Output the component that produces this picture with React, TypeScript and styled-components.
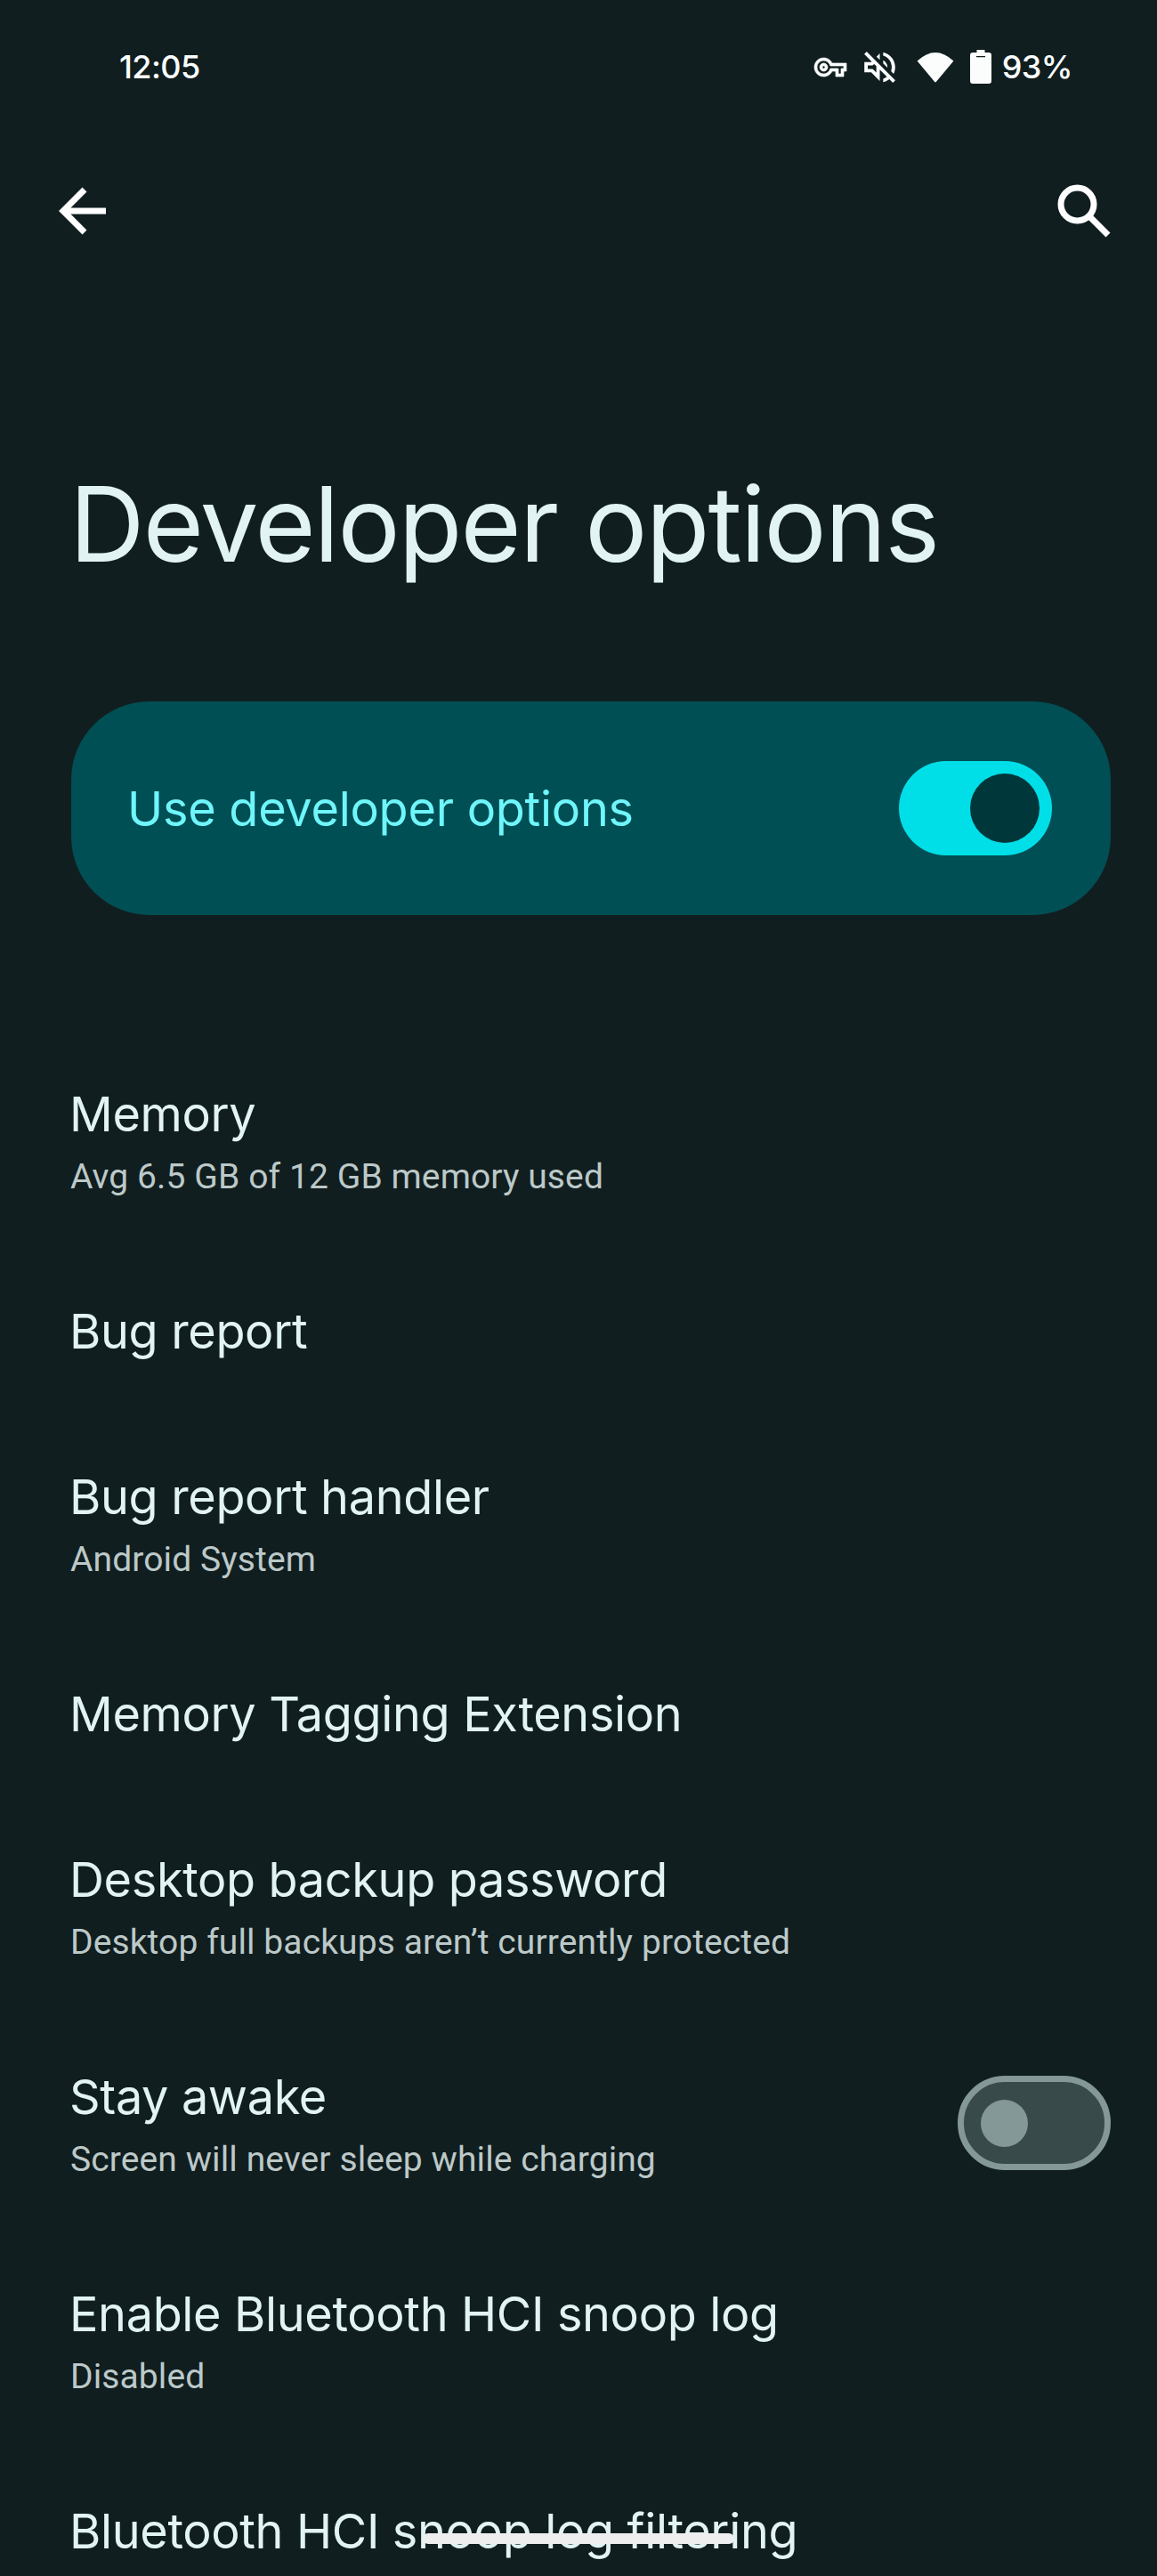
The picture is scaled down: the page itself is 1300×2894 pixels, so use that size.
import React from "react";
import styled, { createGlobalStyle } from "styled-components";

const Global = createGlobalStyle`
  html, body { margin: 0; padding: 0; background: #111e20; }
  #root { width: 1300px; }
`;

const Screen = styled.div`
  position: relative;
  width: 1300px;
  height: 2894px;
  overflow: hidden;
  background: #111e20;
  font-family: "Inter", "Liberation Sans", sans-serif;
`;

const StatusBar = styled.div`
  height: 150px;
  box-sizing: border-box;
  padding: 0 95px 0 134px;
  display: flex;
  align-items: center;
  justify-content: space-between;
  color: #fafdfc;
  font-size: 36px;
  font-weight: 500;
  letter-spacing: -0.6px;
`;

const StatusIcons = styled.div`
  display: flex;
  align-items: center;
`;

const StatusGlyph = styled.svg<{ $gap: number; $bold?: boolean }>`
  display: block;
  fill: #fafdfc;
  stroke: ${(p) => (p.$bold ? "#fafdfc" : "none")};
  stroke-width: ${(p) => (p.$bold ? 0.45 : 0)};
  overflow: visible;
  margin-right: ${(p) => p.$gap}px;
`;

const TopBar = styled.div`
  height: 174px;
  box-sizing: border-box;
  padding: 0 52px 0 65px;
  display: flex;
  align-items: center;
  justify-content: space-between;
`;

const NavIcon = styled.svg`
  display: block;
  fill: none;
  stroke: #ffffff;
  stroke-width: 7;
`;

const Title = styled.h1`
  margin: 0;
  padding: 199px 0 0 78px;
  height: 132px;
  font-size: 117px;
  line-height: 132px;
  font-weight: 400;
  color: #e2f3f3;
  letter-spacing: -1.8px;
`;

const MainCard = styled.div`
  margin: 133px 52px 0 80px;
  height: 240px;
  box-sizing: border-box;
  padding: 0 66px 0 63px;
  border-radius: 88px;
  background: #004f54;
  display: flex;
  align-items: center;
  justify-content: space-between;
`;

const MainLabel = styled.span`
  font-size: 54px;
  font-weight: 400;
  color: #6ff6fb;
  letter-spacing: -0.25px;
`;

const Track = styled.div<{ $on: boolean }>`
  width: 172px;
  height: 106px;
  box-sizing: border-box;
  flex: none;
  border-radius: 53px;
  display: flex;
  align-items: center;
  background: ${(p) => (p.$on ? "#00dfe8" : "#384a49")};
  border: ${(p) => (p.$on ? "none" : "7px solid #839897")};
  justify-content: ${(p) => (p.$on ? "flex-end" : "flex-start")};
  padding: ${(p) => (p.$on ? "0 14px" : "0 19px")};
`;

const Knob = styled.div<{ $on: boolean }>`
  width: ${(p) => (p.$on ? 78 : 53)}px;
  height: ${(p) => (p.$on ? 78 : 53)}px;
  border-radius: 50%;
  background: ${(p) => (p.$on ? "#00373b" : "#839897")};
`;

const List = styled.div`
  margin-top: 131px;
`;

const Row = styled.div<{ $two: boolean }>`
  height: ${(p) => (p.$two ? 244 : 186)}px;
  box-sizing: border-box;
  padding: 0 52px 0 78px;
  display: flex;
  align-items: center;
  justify-content: space-between;
`;

const RowText = styled.div<{ $two: boolean }>`
  display: flex;
  flex-direction: column;
  padding-top: ${(p) => (p.$two ? 12 : 0)}px;
`;

const RowTitle = styled.div`
  font-size: 54px;
  line-height: 70px;
  font-weight: 400;
  color: #e2f3f3;
  letter-spacing: -0.35px;
  white-space: nowrap;
`;

const RowSub = styled.div`
  font-family: "Roboto", "Liberation Sans", sans-serif;
  font-size: 39px;
  line-height: 70px;
  padding-left: 1px;
  color: #bcc9c8;
  letter-spacing: 0.1px;
  white-space: nowrap;
`;

const GestureHandle = styled.div`
  position: absolute;
  left: 475px;
  top: 2846px;
  width: 350px;
  height: 12px;
  border-radius: 6px;
  background: #eeeeee;
`;

const rows = [
  { t: "Memory", s: "Avg 6.5 GB of 12 GB memory used" },
  { t: "Bug report" },
  { t: "Bug report handler", s: "Android System" },
  { t: "Memory Tagging Extension" },
  { t: "Desktop backup password", s: "Desktop full backups aren’t currently protected" },
  { t: "Stay awake", s: "Screen will never sleep while charging", toggle: true },
  { t: "Enable Bluetooth HCI snoop log", s: "Disabled" },
  { t: "Bluetooth HCI snoop log filtering", s: "\u00a0" },
];

export default function App() {
  return (
    <Screen>
      <Global />
      <StatusBar>
        <span>12:05</span>
        <StatusIcons>
          <StatusGlyph $gap={20} $bold width={36} height={21} viewBox="0 5 24 14">
            <path d="M22 19h-6v-4h-2.68c-1.14 2.42-3.6 4-6.32 4-3.86 0-7-3.14-7-7s3.14-7 7-7c2.72 0 5.17 1.58 6.32 4H24v6h-2v4zm-4-2h2v-4h2v-2H11.94l-.23-.67C11.01 8.34 9.11 7 7 7c-2.76 0-5 2.24-5 5s2.24 5 5 5c2.11 0 4.01-1.34 4.71-3.33l.23-.67H18v4zM7 15c-1.65 0-3-1.35-3-3s1.35-3 3-3 3 1.35 3 3-1.35 3-3 3zm0-4c-.55 0-1 .45-1 1s.45 1 1 1 1-.45 1-1-.45-1-1-1z" />
          </StatusGlyph>
          <StatusGlyph $gap={24} width={35} height={35} viewBox="2.9 2.9 18.2 18.2">
            <path d="M4.34 2.93L2.93 4.34 7.29 8.7 7 9H3v6h4l5 5v-6.59l4.18 4.18c-.65.49-1.38.88-2.18 1.11v2.06c1.34-.3 2.57-.92 3.61-1.75l2.05 2.05 1.41-1.41L4.34 2.93zM10 15.17L7.83 13H5v-2h2.83l.88-.88L10 11.41v3.76zM19 12c0 .82-.15 1.61-.41 2.34l1.53 1.53c.56-1.17.88-2.48.88-3.87 0-4.28-2.99-7.86-7-8.77v2.06c2.89.86 5 3.54 5 6.71zm-7-8l-1.88 1.88L12 7.76zm4.5 8c0-1.77-1.02-3.29-2.5-4.03v1.79l2.48 2.48c.01-.08.02-.16.02-.24z" />
          </StatusGlyph>
          <StatusGlyph $gap={18} width={42} height={36} viewBox="0 0 42 36">
            <path d="M0.6 11.5 Q21 -7.5 41.4 11.5 L22 34.8 Q21 36 20 34.8 Z" />
          </StatusGlyph>
          <StatusGlyph $gap={12} width={24} height={38} viewBox="0 0 24 38">
            <path fillRule="evenodd" d="M7.5 0h9v3H21a3 3 0 0 1 3 3v29a3 3 0 0 1-3 3H3a3 3 0 0 1-3-3V6a3 3 0 0 1 3-3h4.5zM7 7v1.2h10V7z" />
          </StatusGlyph>
          <span>93%</span>
        </StatusIcons>
      </StatusBar>
      <TopBar>
        <NavIcon width={56} height={56} viewBox="0 0 56 56">
          <path d="M54 28H6M30 4 6 28l24 24" />
        </NavIcon>
        <NavIcon width={60} height={60} viewBox="0 0 60 60">
          <circle cx="22.5" cy="22.5" r="18.5" />
          <path d="M36 36l21 21" />
        </NavIcon>
      </TopBar>
      <Title>Developer options</Title>
      <MainCard>
        <MainLabel>Use developer options</MainLabel>
        <Track $on>
          <Knob $on />
        </Track>
      </MainCard>
      <List>
        {rows.map((r) => (
          <Row key={r.t} $two={!!r.s}>
            <RowText $two={!!r.s}>
              <RowTitle>{r.t}</RowTitle>
              {r.s && <RowSub>{r.s}</RowSub>}
            </RowText>
            {r.toggle && (
              <Track $on={false}>
                <Knob $on={false} />
              </Track>
            )}
          </Row>
        ))}
      </List>
      <GestureHandle />
    </Screen>
  );
}
